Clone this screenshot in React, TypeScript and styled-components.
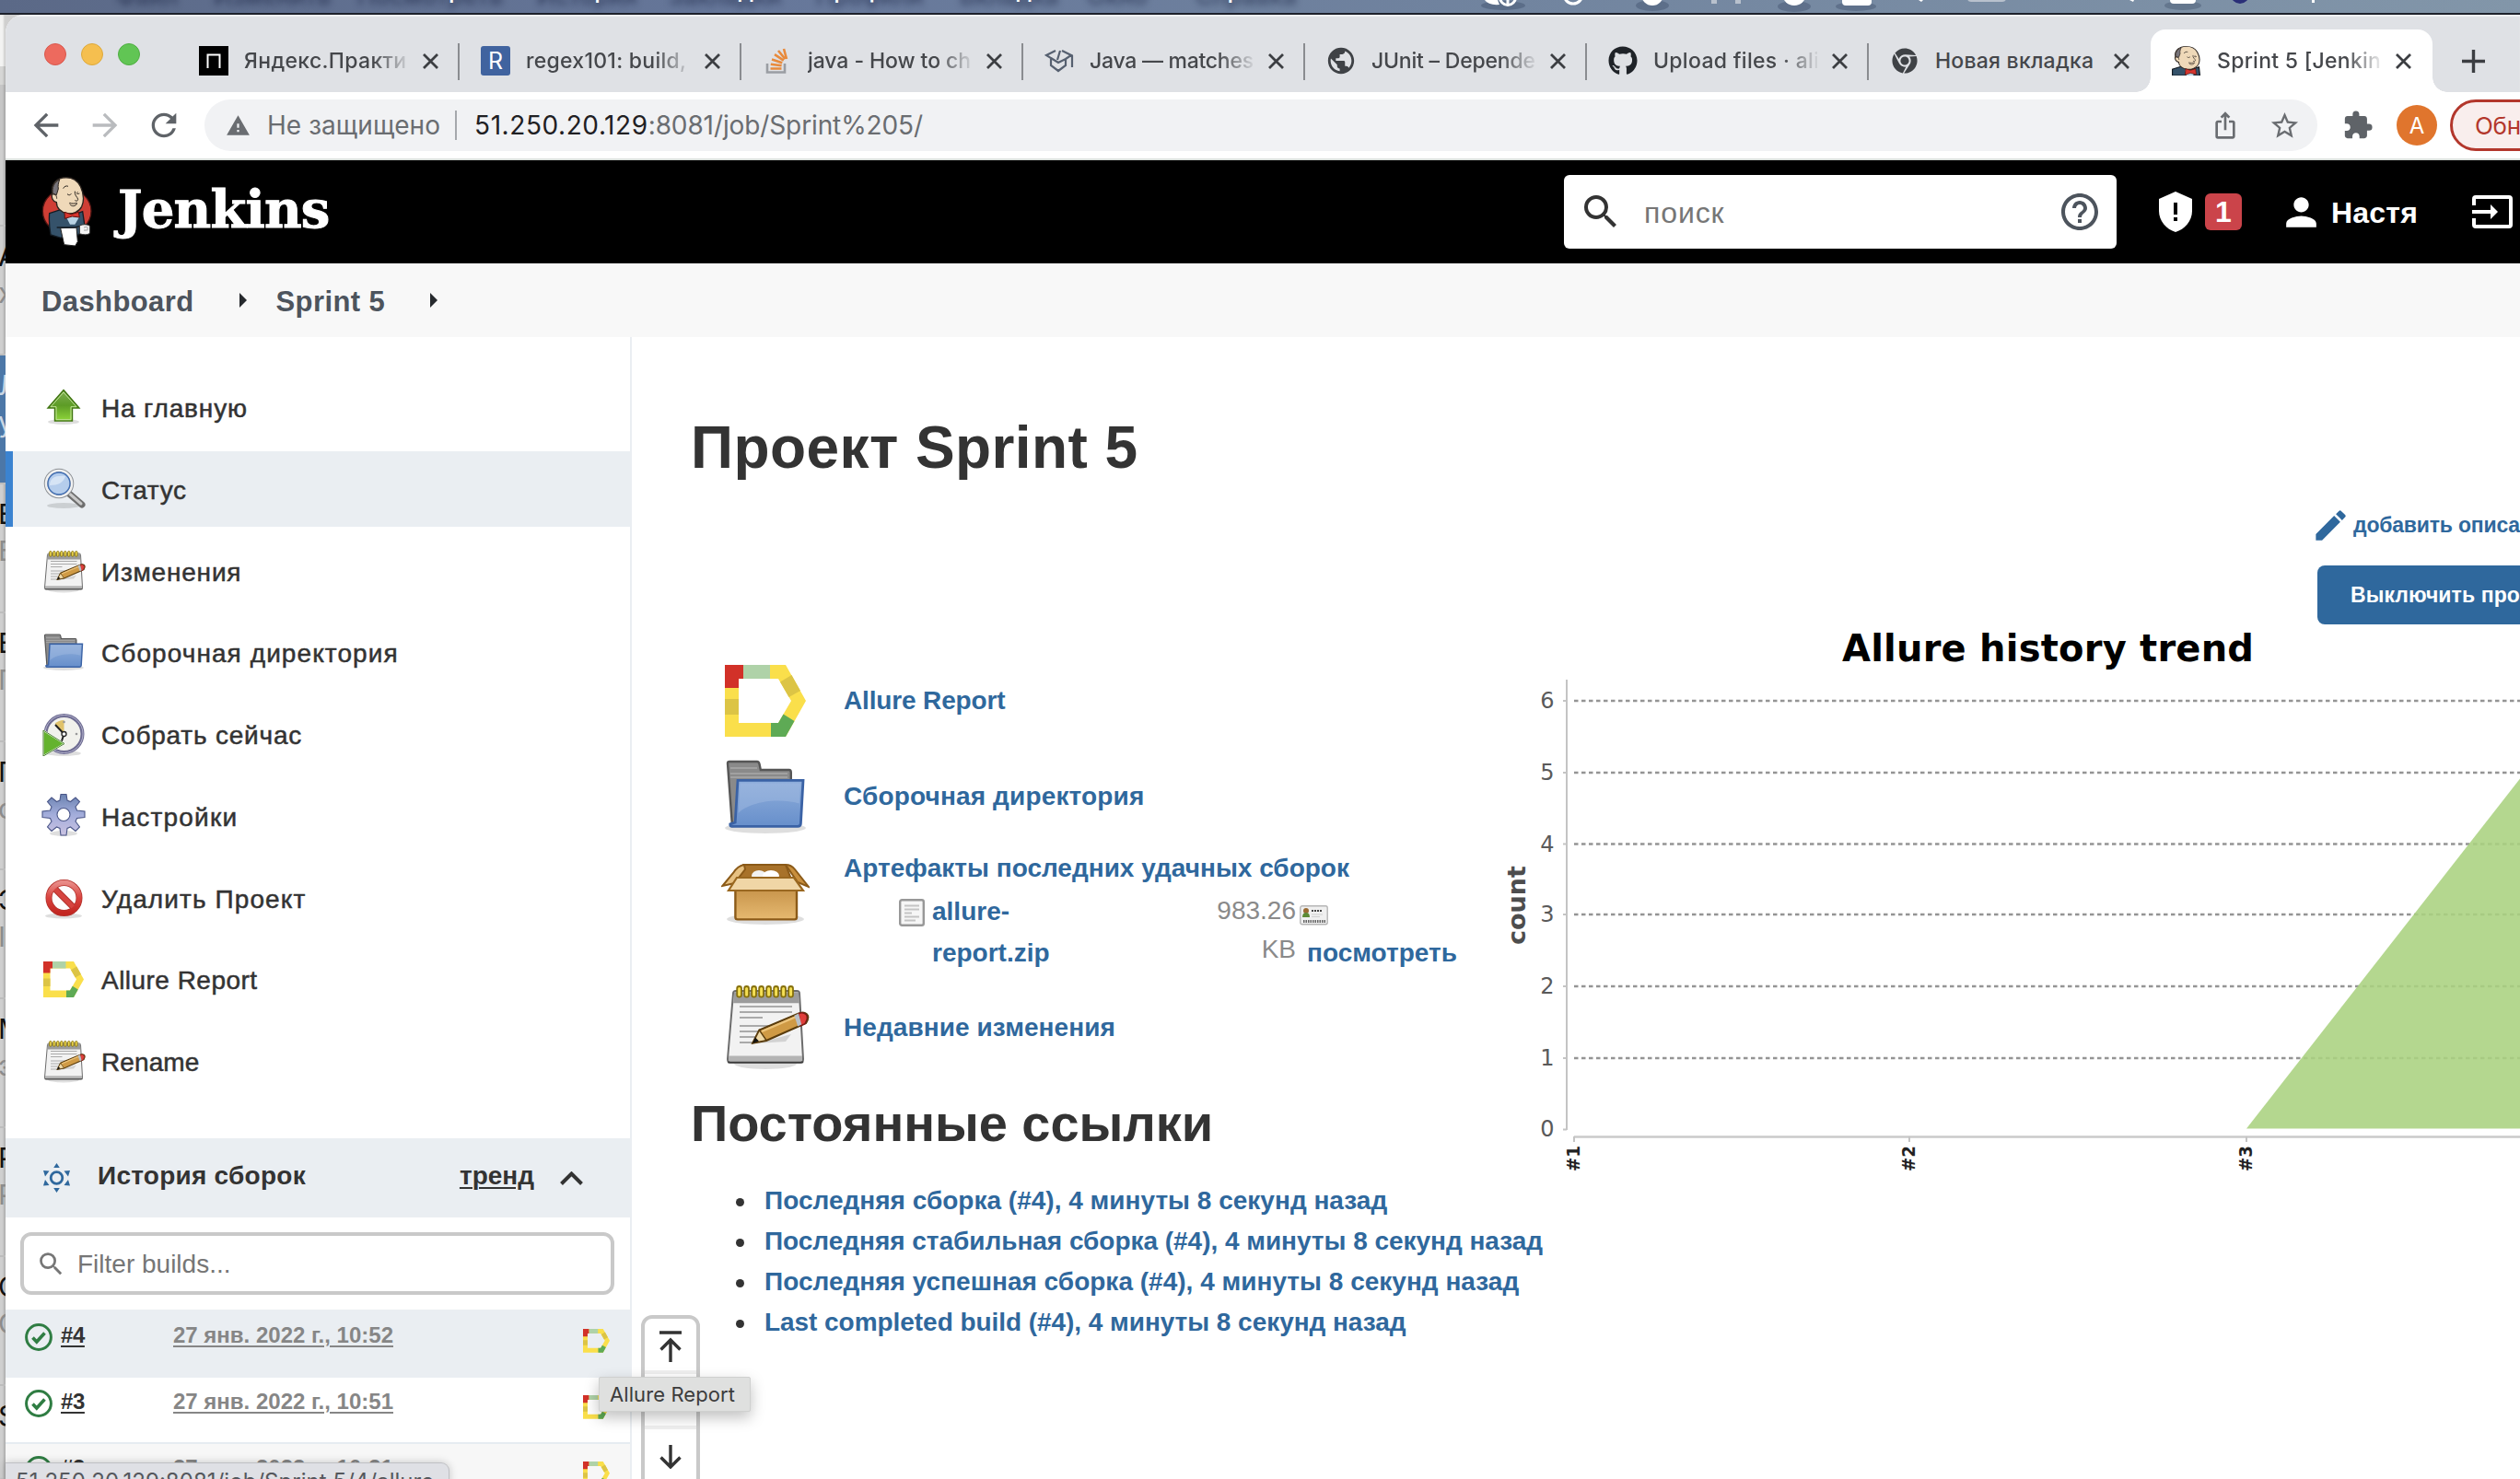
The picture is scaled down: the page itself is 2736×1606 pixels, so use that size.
import React from "react";
import styled, { createGlobalStyle, css } from "styled-components";
import {
  MdArrowBack,
  MdArrowForward,
  MdRefresh,
  MdWarning,
  MdStarBorder,
  MdExtension,
  MdIosShare,
  MdSearch,
  MdHelpOutline,
  MdPerson,
  MdPublic,
  MdEdit,
} from "react-icons/md";
import { FaGithub, FaChrome } from "react-icons/fa";

const PAGE_FONT = `"Liberation Sans", Arial, sans-serif`;
const UI_FONT = `Inter, "Liberation Sans", sans-serif`;
const LINK = "#2f689d";
const TEXT = "#333333";

const GlobalStyle = createGlobalStyle`
  * { box-sizing: border-box; }
  html, body { margin: 0; padding: 0; background: #fff; }
  svg { display: block; flex: none; }
`;

const Screen = styled.div`
  position: relative;
  width: 2736px;
  height: 1606px;
  overflow: hidden;
  display: flex;
  flex-direction: column;
  font-family: ${PAGE_FONT};
  color: ${TEXT};
  white-space: nowrap;
`;

/* ---------- macOS menu bar ---------- */

const MenuBar = styled.div`
  height: 16px;
  flex: none;
  overflow: hidden;
  display: flex;
  background: linear-gradient(90deg, #5b6987 0%, #66779a 30%, #71849f 60%, #8296a9 100%);
  border-bottom: 2px solid #1d212b;
  font: 500 26px/30px ${UI_FONT};
  color: #fff;
`;
const MenuWord = styled.div<{ $w: number }>`
  width: ${(p) => p.$w}px;
  flex: none;
  height: 30px;
  margin-top: -26px;
  text-shadow: 0 7px 7px rgba(20, 30, 60, 0.55);
`;

/* ---------- desktop & window ---------- */

const Desktop = styled.div`
  flex: 1;
  min-height: 0;
  display: flex;
  background: #cfcfcf;
`;
const BackStrip = styled.div`
  width: 6px;
  flex: none;
  overflow: hidden;
  padding-top: 228px;
  background: linear-gradient(180deg, #f3f3f2 0 56px, #d6d6d5 56px 76px, #c6c6c6 76px 136px, #cfcfcf 136px);
  box-shadow: inset -2px 0 2px rgba(0, 0, 0, 0.15);
`;
const BackItem = styled.div<{ $active?: boolean }>`
  height: 139.9px;
  padding-top: 16px;
  border-top: 2px solid #bdbdbd;
  font: 400 30px/32px ${UI_FONT};
  color: ${(p) => (p.$active ? "#c9d6e4" : "#111")};
  background: ${(p) => (p.$active ? "#4c77a7" : "transparent")};
  > span {
    display: block;
    height: 40px;
    margin-left: -2px;
    overflow: hidden;
  }
  > span + span {
    color: ${(p) => (p.$active ? "#c9d6e4" : "#8c8c8c")};
  }
`;
const Window = styled.div`
  flex: 1;
  min-width: 0;
  display: flex;
  flex-direction: column;
  background: #fff;
  border-top-left-radius: 20px;
  overflow: hidden;
`;

/* ---------- tab strip ---------- */

const TabStrip = styled.div`
  height: 84px;
  flex: none;
  padding-top: 16px;
  display: flex;
  background: #dfe1e5;
  box-shadow: inset 0 2px 1px #f1f2f4;
`;
const Lights = styled.div`
  width: 187px;
  flex: none;
  padding: 15px 0 0 42px;
  display: flex;
  gap: 16px;
`;
const Light = styled.i<{ $c: string; $b: string }>`
  width: 24px;
  height: 24px;
  border-radius: 50%;
  background: ${(p) => p.$c};
  border: 1px solid ${(p) => p.$b};
`;
const TabBox = styled.div<{ $active?: boolean; $sep?: boolean }>`
  position: relative;
  width: 306px;
  height: 68px;
  flex: none;
  padding-left: 23px;
  display: flex;
  align-items: center;
  ${(p) =>
    p.$sep &&
    css`
      background: linear-gradient(#8a8c90, #8a8c90) no-repeat;
      background-size: 2px 40px;
      background-position: right 15px;
    `}
  ${(p) =>
    p.$active &&
    css`
      background: #fff;
      border-radius: 16px 16px 0 0;
      &::before,
      &::after {
        content: "";
        position: absolute;
        bottom: 0;
        width: 16px;
        height: 16px;
      }
      &::before {
        left: -16px;
        background: radial-gradient(circle at 0 0, transparent 15.5px, #fff 16px);
      }
      &::after {
        right: -16px;
        background: radial-gradient(circle at 100% 0, transparent 15.5px, #fff 16px);
      }
    `}
`;
const Favicon = styled.div`
  width: 32px;
  height: 32px;
  margin-right: 17px;
  display: flex;
  align-items: center;
  justify-content: center;
  color: #3f4246;
`;
const LetterIcon = styled.div<{ $bg: string }>`
  width: 32px;
  height: 32px;
  border-radius: ${(p) => (p.$bg === "#000" ? 0 : 3)}px;
  background: ${(p) => p.$bg};
  color: #fff;
  font: 400 25px/32px ${UI_FONT};
  text-align: center;
`;
const TabTitle = styled.div<{ $ls: number; $fade: boolean }>`
  width: 178px;
  overflow: hidden;
  font: 500 23px/32px ${UI_FONT};
  letter-spacing: ${(p) => p.$ls}px;
  color: #45474b;
  margin-right: 16px;
  ${(p) =>
    p.$fade &&
    css`
      mask-image: linear-gradient(90deg, #000 140px, transparent 182px);
    `}
`;
const NewTab = styled.div`
  margin-left: 32px;
  display: flex;
  align-items: center;
`;

/* ---------- toolbar ---------- */

const Toolbar = styled.div`
  height: 74px;
  flex: none;
  padding: 0 0 0 24px;
  display: flex;
  align-items: center;
  border-bottom: 2px solid #dbe0dd;
  color: #5f6368;
`;
const NavButtons = styled.div`
  width: 192px;
  flex: none;
  display: flex;
  gap: 24px;
`;
const Omnibox = styled.div`
  width: 2294px;
  height: 56px;
  flex: none;
  border-radius: 28px;
  background: #f1f2f4;
  margin-right: 27px;
  padding: 0 18px 0 23px;
  display: flex;
  align-items: center;
  font: 400 28px/56px ${UI_FONT};
  color: #6a6d71;
`;
const Insecure = styled.span`
  margin-left: 18px;
  padding-right: 16px;
  letter-spacing: 0.06px;
`;
const UrlSep = styled.i`
  width: 2px;
  height: 32px;
  background: #a5a8ac;
  margin-right: 19px;
`;
const UrlHost = styled.b`
  font-weight: 400;
  letter-spacing: 0.58px;
  color: #1f2023;
`;
const UrlPath = styled.span`
  letter-spacing: -0.11px;
  flex: 1;
`;
const ShareBtn = styled.div`
  margin-right: 31px;
`;
const Avatar = styled.div`
  width: 44px;
  height: 44px;
  flex: none;
  margin: 0 14px 0 25px;
  border-radius: 50%;
  background: #e0752d;
  color: #fff;
  font: 400 24px/45px ${UI_FONT};
  text-align: center;
`;
const UpdatePill = styled.div`
  width: 220px;
  height: 56px;
  flex: none;
  border: 3px solid #b3372c;
  border-radius: 28px;
  background: #f9eeed;
  color: #b3372c;
  padding-left: 24px;
  font: 400 26px/52px ${UI_FONT};
  letter-spacing: -0.3px;
`;

/* ---------- jenkins header ---------- */

const Header = styled.div`
  height: 112px;
  flex: none;
  background: #000;
  display: flex;
  align-items: center;
  color: #fff;
`;
const Brand = styled.div`
  width: 1692px;
  flex: none;
  padding-left: 39px;
  display: flex;
  align-items: center;
`;
const BrandName = styled.div`
  margin: -7px 0 0 28px;
  font: 700 56px/64px "DejaVu Serif", serif;
  letter-spacing: -0.8px;
  -webkit-text-stroke: 1px #fff;
`;
const SearchBox = styled.div`
  width: 600px;
  height: 80px;
  flex: none;
  margin-right: 46px;
  padding: 0 16px 0 16px;
  border-radius: 6px;
  background: #fff;
  display: flex;
  align-items: center;
  color: ${TEXT};
`;
const SearchHint = styled.span`
  flex: 1;
  margin-left: 23px;
  color: #767676;
  font-size: 32px;
  letter-spacing: 0.9px;
  line-height: 80px;
  padding-top: 1px;
`;
const AlertBadge = styled.div`
  width: 40px;
  height: 40px;
  margin: 0 40px 0 14px;
  border-radius: 6px;
  background: #cb444a;
  font: 700 32px/41px ${PAGE_FONT};
  text-align: center;
`;
const UserName = styled.div`
  margin: 2px 58px 0 8px;
  font: 700 32px/40px ${PAGE_FONT};
  letter-spacing: 0.2px;
  width: 95px;
`;

const Crumbs = styled.div`
  height: 80px;
  flex: none;
  background: #f8f8f8;
  padding: 3px 0 0 39px;
  display: flex;
  align-items: center;
  font: 700 31px/76px ${PAGE_FONT};
  letter-spacing: 0.4px;
  color: #4d545d;
`;
const CrumbArrow = styled.i`
  margin: -3px 32px 0 49px;
  border-left: 8px solid #26292d;
  border-top: 8px solid transparent;
  border-bottom: 8px solid transparent;
`;

/* ---------- page ---------- */

const Page = styled.div`
  flex: 1;
  min-height: 0;
  display: flex;
`;
const Sidebar = styled.div`
  width: 680px;
  flex: none;
  border-right: 2px solid #eaeef2;
  overflow: hidden;
`;
const Tasks = styled.div`
  padding-top: 35px;
  display: flex;
  flex-direction: column;
  gap: 6.75px;
`;
const Task = styled.div<{ $active?: boolean }>`
  height: 82px;
  padding: 0 0 0 39px;
  display: flex;
  align-items: center;
  background: ${(p) => (p.$active ? "linear-gradient(90deg, #3b83d0 8px, #eaeef2 8px)" : "none")};
`;
const TaskLabel = styled.span<{ $ls: number }>`
  margin: 4px 0 0 17px;
  font-size: 28px;
  line-height: 40px;
  letter-spacing: ${(p) => p.$ls}px;
  -webkit-text-stroke: 0.5px ${TEXT};
`;
const HistoryHead = styled.div`
  height: 86px;
  margin-top: 43px;
  padding: 0 51px 0 41px;
  background: #eaeef2;
  display: flex;
  align-items: center;
  font: 700 28px/40px ${PAGE_FONT};
`;
const HistoryTitle = styled.span`
  flex: 1;
  margin: -4px 0 0 30px;
  letter-spacing: 0.25px;
`;
const TrendLink = styled.span`
  margin: -4px 28px 0 0;
  text-decoration: underline;
  text-decoration-thickness: 2px;
  text-underline-offset: 3px;
`;
const FilterBox = styled.div`
  margin: 16px 17px 16px 16px;
  height: 68px;
  border: 4px solid #c9c9c9;
  border-radius: 12px;
  padding: 1px 0 0 13px;
  display: flex;
  align-items: center;
  gap: 12px;
  color: #767676;
  font-size: 28px;
`;
const Build = styled.div<{ $tone: "sel" | "plain" | "alt" }>`
  height: ${(p) => (p.$tone === "sel" ? 74 : 72)}px;
  padding: ${(p) => (p.$tone === "sel" ? 15 : 13)}px 22px 0 21px;
  display: flex;
  align-items: flex-start;
  font: 700 24px/30px ${PAGE_FONT};
  background: ${(p) => (p.$tone === "sel" ? "#eaeef2" : p.$tone === "alt" ? "#f7f7f7" : "#fff")};
  border-bottom: ${(p) => (p.$tone === "plain" ? "2px solid #e6ecf1" : "none")};
`;
const BuildNo = styled.span`
  width: 122px;
  margin: -2px 0 0 9px;
  letter-spacing: -0.4px;
  text-decoration: underline;
  text-decoration-thickness: 2px;
  text-underline-offset: 3px;
`;
const BuildDate = styled.span`
  flex: 1;
  margin-top: -2px;
  color: #868686;
  text-decoration: underline;
  text-decoration-thickness: 2px;
  text-underline-offset: 3px;
`;
const BuildReport = styled.span`
  margin-top: 6px;
`;

const Main = styled.div`
  flex: 1;
  min-width: 0;
  padding: 84px 0 0 1px;
`;
const Title = styled.h1`
  margin: 0 0 0 63px;
  font: 700 64px/72px ${PAGE_FONT};
  letter-spacing: 0.42px;
`;
const Columns = styled.div`
  display: flex;
`;
const Overview = styled.div`
  width: 933px;
  flex: none;
  padding-top: 191px;
`;
const Entry = styled.div<{ $top?: boolean; $gap?: number; $ls?: number }>`
  padding-left: 96px;
  min-height: 96px;
  margin-bottom: ${(p) => p.$gap ?? 8}px;
  display: flex;
  align-items: ${(p) => (p.$top ? "flex-start" : "center")};
  gap: 37px;
  font: 700 28px/44px ${PAGE_FONT};
  letter-spacing: ${(p) => p.$ls ?? 0}px;
  color: ${LINK};
`;
const EntryIcon = styled.div`
  width: 96px;
  height: 96px;
  flex: none;
  display: flex;
  align-items: center;
  justify-content: center;
`;
const EntryLabel = styled.span`
  padding-top: 3px;
`;
const FileTable = styled.div`
  padding: 3px 0 0 60px;
  display: grid;
  grid-template-columns: 36px 300px 95px auto;
  align-items: start;
`;
const FileIconCell = styled.span`
  padding-top: 8px;
`;
const FileName = styled.span`
  line-height: 44.5px;
`;
const FileSize = styled.span`
  font-weight: 400;
  line-height: 42px;
  text-align: right;
  color: #8a8a8a;
`;
const FileView = styled.span`
  padding: 15px 0 0 4px;
  display: flex;
  flex-direction: column;
  gap: 8px;
`;
const ViewLink = styled.span`
  padding-left: 8px;
`;
const Subtitle = styled.h2`
  margin: 0 0 30px 63px;
  font: 700 56px/64px ${PAGE_FONT};
  letter-spacing: -0.05px;
`;
const Links = styled.ul`
  margin: 0;
  padding: 0;
  list-style: none;
`;
const LinkRow = styled.li<{ $ls: number }>`
  height: 44px;
  padding-left: 112px;
  display: flex;
  align-items: center;
  font: 700 28px/44px ${PAGE_FONT};
  letter-spacing: ${(p) => p.$ls}px;
  color: ${LINK};
  &::before {
    content: "";
    flex: none;
    width: 9px;
    height: 9px;
    margin: 3px 22px 0 0;
    border-radius: 50%;
    background: ${TEXT};
  }
`;

const Aside = styled.div`
  flex: 1;
  min-width: 0;
  overflow: hidden;
  padding-top: 24px;
`;
const EditRow = styled.div`
  height: 48px;
  padding-left: 889px;
  display: flex;
  align-items: center;
  gap: 3px;
  color: ${LINK};
  font: 700 23px/48px ${PAGE_FONT};
  letter-spacing: -0.2px;
`;
const DisableButton = styled.div`
  width: 320px;
  height: 64px;
  margin: 20px 0 2px 896px;
  padding-left: 36px;
  border-radius: 8px;
  background: ${LINK};
  color: #fff;
  font: 700 23px/64px ${PAGE_FONT};
  letter-spacing: 0.1px;
`;

/* ---------- floating pieces ---------- */

const Mover = styled.div`
  position: absolute;
  left: 696px;
  top: 1428px;
  width: 64px;
  height: 260px;
  border: 4px solid #c9c9c9;
  border-radius: 12px;
  background: #fff;
  color: ${TEXT};
  display: flex;
  flex-direction: column;
`;
const MoverCell = styled.div`
  height: 60px;
  flex: none;
  padding-top: 3px;
  display: flex;
  align-items: center;
  justify-content: center;
  border-bottom: 4px solid #efefef;
`;
const Tooltip = styled.div`
  position: absolute;
  left: 650px;
  top: 1495px;
  width: 165px;
  height: 38px;
  background: #dfe0df;
  border: 1px solid #cfd0cf;
  border-radius: 2px;
  box-shadow: 0 6px 16px rgba(0, 0, 0, 0.25);
  font: 400 22px/37px ${UI_FONT};
  letter-spacing: 0.09px;
  color: #3c3c3c;
  padding-left: 11px;
`;
const StatusBubble = styled.div`
  position: absolute;
  left: 6px;
  top: 1588px;
  width: 482px;
  height: 48px;
  background: #dfe0e5;
  border: 1px solid #bfc0c4;
  border-left: 0;
  border-top-right-radius: 9px;
  box-shadow: 0 0 10px rgba(0, 0, 0, 0.2);
  font: 400 24px/40px ${UI_FONT};
  letter-spacing: 0.05px;
  color: #55585d;
  padding-left: 11px;
`;

/* ---------- drawings ---------- */

const Cross = () => (
  <svg width="17" height="17" viewBox="0 0 17 17" stroke="#3c3e42" strokeWidth="2.8">
    <path d="M1 1L16 16M16 1L1 16" />
  </svg>
);

const PracticumIcon = () => (
  <svg width="32" height="32" viewBox="0 0 32 32">
    <path d="M0 0h32v32H0z" fill="#000" />
    <path d="M9.500 24V9.500h13V24" fill="none" stroke="#fff" strokeWidth="2" />
  </svg>
);

const StackIcon = () => (
  <svg width="26" height="28" viewBox="0 0 26 28" fill="none">
    <path d="M2 17v9.5h19V17" stroke="#9a9da3" strokeWidth="2.6" />
    <g stroke="#e88a3c" strokeWidth="2.6">
      <path d="M5.5 22.5h12M5.8 17.8l11.8 1.4M7 12.6l11.3 3.6M10 7.2l9.8 6.4M14 3l7.4 9M20 1l3 11" />
    </g>
  </svg>
);

const CubeIcon = () => (
  <svg width="32" height="26" viewBox="0 0 32 26" fill="none" stroke="#566070" strokeWidth="2.2">
    <path d="M12 2L2 7l5 3v8l8 6 8-6v-7L15 15 7 10M19 2l10 5-6 4M30 7v13M17 2l-3 10" />
  </svg>
);

const Face = () => (
  <>
    <path d="M169 118c-4-22 8-45 34-50 28-4 48 8 58 28 10 22 12 48 4 66-8 16-30 26-48 22-20-4-34-18-34-36-12-2-18-16-14-30z" fill="#efd9b9" stroke="#2b241f" strokeWidth="4" />
    <path d="M171 120c-4-18 4-38 22-46-4 12-6 20-4 30l-6 20z" fill="#77747a" stroke="#2b241f" strokeWidth="3" />
    <path d="M166 124c12-6 18 2 18 12M205 103c3-7 10-10 16-7M218 121c5 5 10 4 13-1M252 114c-4 5-4 9 6 5M243 112c-2 14 8 18 10 26-1 7-6 6-10 4M225 150c8 3 16 3 25 0M226 154c7 9 18 8 24-2" fill="none" stroke="#2b241f" strokeWidth="3" />
  </>
);

const JenkinsLogo = () => (
  <svg width="55" height="76" viewBox="134 65 165 228">
    <ellipse cx="217" cy="177" rx="79" ry="73" fill="#cf3e35" stroke="#4a1512" strokeWidth="4" />
    <path d="M160 184l36-12 34 20 38-14 8 54-22 22-48 4-8 6-34-10c-4-22-6-46-4-70z" fill="#35526a" stroke="#141c24" strokeWidth="4" />
    <path d="M215 196l22-4 20 4-14 24h-16z" fill="#b9d3e4" />
    <Face />
    <path d="M209 180l22 7 24-7 3 17-24-3-24 7z" fill="#d8352e" stroke="#5d120e" strokeWidth="3" />
    <path d="M196 232l52-2 4 46-8 14-36-4z" fill="#fff" stroke="#222" strokeWidth="3" />
    <path d="M184 230h58l16-4" fill="none" stroke="#141c24" strokeWidth="4" />
    <path d="M258 224c14-6 28-4 34 2v22c-8 8-22 6-34 2z" fill="#f4f4f4" stroke="#333" strokeWidth="3" />
    <path d="M272 230l10-2M272 239h10M284 228v12" fill="none" stroke="#777" strokeWidth="2" />
  </svg>
);

const JenkinsFavicon = () => (
  <svg width="32" height="32" viewBox="154 65 124 152" preserveAspectRatio="none">
    <path d="M156 217v-32l36-14 40 16 36-14 4 44z" fill="#35526a" stroke="#141c24" strokeWidth="5" />
    <path d="M210 190h40l-6 27h-28z" fill="#b9d3e4" />
    <Face />
    <path d="M212 182l20 8 22-8 3 30-25-8-22 10z" fill="#d8352e" stroke="#5d120e" strokeWidth="3" />
  </svg>
);

const ShieldIcon = () => (
  <svg width="36" height="44" viewBox="0 0 36 44">
    <path d="M18 0l18 8v13c0 11-8 20-18 23C8 41 0 32 0 21V8z" fill="#fff" />
    <path d="M16 12h4v13h-4zM16 28h4v4h-4z" fill="#000" />
  </svg>
);

const LogoutIcon = () => (
  <svg width="44" height="36" viewBox="0 0 44 36" fill="none" stroke="#fff" strokeWidth="4">
    <path d="M2 11V4q0-2 2-2h36q2 0 2 2v28q0 2-2 2H4q-2 0-2-2v-7" />
    <path d="M0 18h25" />
    <path d="M20 10l8 8-8 8z" fill="#fff" stroke="none" />
  </svg>
);

const AllureIcon = ({ w }: { w: number }) => (
  <svg width={w} height={(w * 78) / 88} viewBox="0 0 88 78">
    <path d="M0 0h66l22 39-22 39H0zM15 15v48h43l14-24-14-24z" fill="#fadf4b" fillRule="evenodd" />
    <path d="M0 0h20v15h-5v10H0z" fill="#d23128" />
    <path d="M20 0h29v15H20z" fill="#afd2a8" />
    <path d="M0 37h15v17H0zM60 18.500l12.500-7.500 9.500 17-12.500 7z" fill="#dcc445" />
    <path d="M50 63h8l5.500-9.500L75.500 61 66 78H50z" fill="#5eaa55" />
  </svg>
);

const Shade = ({ y, rx = 20 }: { y: number; rx?: number }) => (
  <ellipse cx="24" cy={y} rx={rx} ry="3" fill="#000" opacity="0.13" />
);

const UpIcon = () => (
  <svg width="48" height="48" viewBox="0 0 48 48">
    <defs>
      <linearGradient id="up" x1="0" y1="0" x2="0" y2="1">
        <stop offset="0" stopColor="#7fae55" />
        <stop offset="0.5" stopColor="#5d9c26" />
        <stop offset="1" stopColor="#8fd63a" />
      </linearGradient>
    </defs>
    <Shade y={40} rx={17} />
    <path d="M24 5.500L41 25h-7.500v14h-19V25H7z" fill="url(#up)" stroke="#3f7410" strokeWidth="1.4" />
    <path d="M24 8l14 15.700h-6v14H16v-14h-6z" fill="none" stroke="#c3e39a" strokeWidth="1" />
  </svg>
);

const LensIcon = () => (
  <svg width="48" height="48" viewBox="0 0 48 48">
    <Shade y={42} rx={18} />
    <path d="M30 29l14 12" stroke="#6e6e6e" strokeWidth="7" strokeLinecap="round" />
    <path d="M31 29.500l12 10.500" stroke="#c9c9c9" strokeWidth="3" strokeLinecap="round" />
    <circle cx="19" cy="18" r="14" fill="#b5cdec" stroke="#8b8f94" strokeWidth="4.500" />
    <circle cx="19" cy="18" r="14" fill="none" stroke="#f1f1f1" strokeWidth="2.600" />
    <circle cx="19" cy="18" r="12" fill="none" stroke="#3f6eb5" strokeWidth="1.300" />
    <path d="M9 20c0-8 6-11 17-10-2 7-8 10-17 10z" fill="#dfeaf8" opacity="0.8" />
  </svg>
);

const NoteIcon = ({ s = 48 }: { s?: number }) => (
  <svg width={s} height={s} viewBox="0 0 48 48">
    <Shade y={44.500} rx={17} />
    <path d="M6.500 6.500q0-1.500 1.500-1.500h33q1.500 0 1.500 1.500l2 35.500q0 2-1.500 2H5q-1.500 0-1.500-2z" fill="#f2f2f2" stroke="#6c6c6c" strokeWidth="1" />
    <path d="M7 5.600h35l.4 6H6.600z" fill="#9c9c9c" />
    <path d="M4 40.300h40v2.700H4z" fill="#b4b4b4" />
    <path d="M3.600 43.700h41" stroke="#3c3c3c" strokeWidth="0.900" />
    <path d="M10 13.500h28.500M10 16.500h28.500M10 19.500h12.500M10 24h24M10 27h20M10 30h12M10 33h8" stroke="#aaaaaa" strokeWidth="1.100" />
    {[0, 1, 2, 3, 4, 5, 6, 7].map((i) => (
      <rect key={i} x={8.600 + i * 4} y="2.500" width="2.400" height="5.800" rx="1.200" fill="#f4df54" stroke="#86700c" strokeWidth="0.900" />
    ))}
    <path d="M19 33.500l19-5-3 4z" fill="#000" opacity="0.13" />
    <path d="M17.200 33.300l3.500-7L41.500 17.500q3-1.500 4.800 0t-.3 5L24.500 32z" fill="#cf9a45" stroke="#5a3c0c" strokeWidth="1.100" />
    <path d="M22 27l20-8.600" stroke="#ecc47c" strokeWidth="1.200" />
    <path d="M17.200 33.300l3.500-7 3.800 5.500z" fill="#efd9a8" stroke="#5a3c0c" strokeWidth="0.700" />
    <path d="M17 33.500l1.500-3.300 2 2z" fill="#111" />
    <path d="M42 17.300q2.500-1 4 .5t-.5 5l-2.500 1.200z" fill="#e0403c" stroke="#7c1c18" strokeWidth="0.700" />
    <path d="M39.700 18.400l2.300-1.100 1.600 6-2 1z" fill="#b9c0c8" />
  </svg>
);

const FolderIcon = ({ s = 48 }: { s?: number }) => (
  <svg width={s} height={s} viewBox="0 0 48 48">
    <defs>
      <linearGradient id="fold" x1="0" y1="0" x2="0" y2="1">
        <stop offset="0" stopColor="#8faedb" />
        <stop offset="1" stopColor="#678fcb" />
      </linearGradient>
    </defs>
    <Shade y={41} rx={22} />
    <path d="M3.500 6q0-1 1-1h15q1 0 1.300 1.500l.6 3h15.500q1 0 1 1.500v27L6 40z" fill="#8a8a8a" stroke="#565656" strokeWidth="1.200" />
    <path d="M5 8.500h14.500M5 11.500h31M5 13.500h31" stroke="#a9a9a9" strokeWidth="0.800" />
    <path d="M9 15.200h35.500l-1.300 23.300q0 1.700-1.700 1.700H6q-1.300 0-1.100-1.300L7.600 38z" fill="url(#fold)" stroke="#3a62a5" strokeWidth="1.400" />
    <path d="M10.300 16.700h32.700l-.6 11C28 24 14 28 9.300 33z" fill="#a3bce2" opacity="0.45" />
  </svg>
);

const ClockIcon = () => (
  <svg width="48" height="48" viewBox="0 0 48 48">
    <Shade y={45} rx={19} />
    <circle cx="24.500" cy="24" r="20" fill="#f1f1ec" stroke="#6e6c92" strokeWidth="4" />
    <circle cx="24.500" cy="24" r="20.500" fill="none" stroke="#b2b1cc" strokeWidth="1" />
    <path d="M24.500 24V9q-6 0-10 4z" fill="#e0c26a" />
    <path d="M24.500 24L15 14M24.500 24l-3 9" stroke="#222" strokeWidth="2" />
    <circle cx="24.500" cy="24" r="2.500" fill="#fff" stroke="#222" strokeWidth="1.300" />
    <circle cx="38" cy="24" r="1.300" fill="#999" />
    <circle cx="24.500" cy="11" r="1.300" fill="#999" />
    <path d="M2 20l23 14.500L2 48z" fill="#64b32e" stroke="#fff" strokeWidth="1.500" />
    <path d="M2 20l23 14.500L2 48z" fill="none" stroke="#35701a" strokeWidth="0.900" />
  </svg>
);

const GearIcon = () => (
  <svg width="48" height="48" viewBox="0 0 48 48">
    <defs>
      <linearGradient id="gear" x1="0" y1="0" x2="0" y2="1">
        <stop offset="0" stopColor="#6a82b0" />
        <stop offset="0.5" stopColor="#a3addb" />
        <stop offset="1" stopColor="#cbc3e2" />
      </linearGradient>
    </defs>
    <Shade y={43} rx={15} />
    <g transform="translate(24 22.500)" fill="url(#gear)" stroke="#4a5688" strokeWidth="1.100">
      <path
        fillRule="evenodd"
        d="M-3-22H3l1 6.500 3.500 1.500 5.500-4.500 4.500 4.500-4.500 5.500 1.500 4 8.500 1V3l-8.500 1-1.500 3.500 4.500 6-4.500 4.500-5.500-4.500L4 15 3 22.500H-3L-4 15l-3.500-1.500-5.500 4.500-4.500-4.500 4.500-6L-14.500 4-23 3v-6.500l8.500-1 1.500-4-4.500-5.500 4.500-4.500 5.500 4.500L-4-15.500zM0-7a7 7 0 1 0 0 14a7 7 0 1 0 0-14z"
      />
    </g>
  </svg>
);

const NoIcon = () => (
  <svg width="48" height="48" viewBox="0 0 48 48">
    <defs>
      <linearGradient id="no" x1="0" y1="0" x2="0" y2="1">
        <stop offset="0" stopColor="#e88a86" />
        <stop offset="0.5" stopColor="#d9433e" />
        <stop offset="1" stopColor="#c32722" />
      </linearGradient>
    </defs>
    <Shade y={43.500} />
    <circle cx="24.500" cy="24" r="16.500" fill="#fdfdfd" stroke="#b3322c" strokeWidth="7" />
    <path d="M13 12.500l23 23" stroke="#b3322c" strokeWidth="7" />
    <path d="M13 12.500l23 23" stroke="#d6443f" strokeWidth="5" />
    <circle cx="24.500" cy="24" r="16.500" fill="none" stroke="url(#no)" strokeWidth="5.400" />
  </svg>
);

const BoxIcon = () => (
  <svg width="96" height="96" viewBox="0 0 48 48">
    <defs>
      <linearGradient id="box" x1="0" y1="0" x2="0" y2="1">
        <stop offset="0" stopColor="#c8954c" />
        <stop offset="1" stopColor="#e6b970" />
      </linearGradient>
    </defs>
    <Shade y={38.500} rx={21} />
    <path d="M12 9h23l5 13H7z" fill="#a8722a" stroke="#8b5a18" strokeWidth="1" />
    <ellipse cx="20.500" cy="15" rx="4" ry="3" fill="#f2f2f2" />
    <ellipse cx="27" cy="15" rx="4.500" ry="3" fill="#fff" />
    <path d="M12.500 9Q9 9.500 6.500 13.500L.7 20.500l6.500-1.500L13 11.500z" fill="#e7c182" stroke="#8b5a18" strokeWidth="1" />
    <path d="M35 9q3 0 5 2.500l7.500 9.500-6-2.500z" fill="#c88f3e" stroke="#8b5a18" strokeWidth="1" />
    <path d="M7.700 22.500h33.300v15q0 1.200-1.200 1.200H9q-1.300 0-1.300-1.200z" fill="url(#box)" stroke="#8b5a18" strokeWidth="1.200" />
    <path d="M8.500 16h31l5 7H4z" fill="#f0d6a6" stroke="#9a6820" strokeWidth="1.100" />
  </svg>
);

const FileIcon = () => (
  <svg width="28" height="30" viewBox="0 0 28 30">
    <rect x="1.200" y="1.200" width="25.600" height="27.600" rx="2" fill="#f6f6f6" stroke="#989898" strokeWidth="2.400" />
    <path d="M6 7.500h16M6 11.500h16M6 15.500h8M6 19.500h16M6 23.500h12" stroke="#c4c4c4" strokeWidth="2" />
  </svg>
);

const CardIcon = () => (
  <svg width="31" height="22" viewBox="0 0 31 22">
    <rect x="0.800" y="0.800" width="29.400" height="20" rx="2" fill="#f0f0f0" stroke="#b5b5b5" strokeWidth="1.400" />
    <circle cx="7" cy="6" r="3" fill="#9a6a32" />
    <path d="M3 13q0-5 4-5t4 5z" fill="#5d8a35" />
    <path d="M13 6h12" stroke="#444" strokeWidth="2" strokeDasharray="2 1" />
    <path d="M13 10h12M13 12.500h9" stroke="#cfcfcf" strokeWidth="1.200" />
    <path d="M4 17.500h24" stroke="#666" strokeWidth="3" strokeDasharray="1.500 1" />
  </svg>
);

const WeatherIcon = () => (
  <svg width="29" height="32" viewBox="0 0 29 32" fill={LINK}>
    <circle cx="14.500" cy="16" r="6.300" fill="none" stroke={LINK} strokeWidth="2.800" />
    <path d="M14.500 0l3.300 5h-6.600zM14.500 32l-3.300-5h6.600zM0 8l6.500.500L2 14.500zM29 8l-6.500.500L27 14.500zM0 24.500l6.500-.500L2 18zM29 24.500l-6.500-.500L27 18z" />
  </svg>
);

const CheckIcon = () => (
  <svg width="30" height="30" viewBox="0 0 30 30" fill="none" stroke="#2f7d43">
    <circle cx="15" cy="15" r="13.400" strokeWidth="3" />
    <path d="M8.500 15.500l4.300 4.500 8.700-9.500" strokeWidth="3.600" />
  </svg>
);

const MenuExtras = () => (
  <svg width="1136" height="14" viewBox="1600 0 1136 14">
    <g fill="#1c2a48" opacity="0.25">
      <ellipse cx="1632" cy="6" rx="24" ry="5" />
      <ellipse cx="1794" cy="6" rx="18" ry="6" />
      <ellipse cx="1948" cy="7" rx="18" ry="6" />
      <ellipse cx="2015" cy="7" rx="22" ry="5" />
      <ellipse cx="2370" cy="6" rx="20" ry="5" />
    </g>
    <path d="M1612 0h14l2 5q-12 1-16-5z" fill="#fff" />
    <circle cx="1637" cy="-3" r="8.500" fill="none" stroke="#fff" strokeWidth="3" />
    <path d="M1637-3v7" stroke="#fff" strokeWidth="3" />
    <circle cx="1708" cy="-6" r="10" fill="none" stroke="#fff" strokeWidth="3" />
    <circle cx="1794" cy="-6" r="12" fill="#fff" />
    <path d="M1858 0h6v4h-6zM1884 0h6v4h-6z" fill="#b8c1cd" />
    <circle cx="1948" cy="-7" r="13" fill="#fff" />
    <rect x="2000" y="-10" width="32" height="16" rx="4" fill="#fff" />
    <rect x="2136" y="-10" width="42" height="12" rx="4" fill="#b8c1cd" />
    <path d="M2083 0h5l-2 2zM2312 0h5l-1 2z" fill="#fff" />
    <rect x="2356" y="-10" width="28" height="14" rx="4" fill="#fff" />
    <circle cx="2432" cy="-6" r="10" fill="#2a2f78" />
    <path d="M2510 0h3v3h-3z" fill="#fff" />
  </svg>
);

const gridY = [761, 839, 916.500, 993, 1071, 1149];
const CHART_FONT = `"DejaVu Sans", sans-serif`;

const TrendChart = () => (
  <svg width="1116" height="600" viewBox="1620 680 1116 600" fontFamily={CHART_FONT}>
    <text x="2000" y="718" fontSize="40" fontWeight="700" fill="#000" textLength="447">
      Allure history trend
    </text>
    {gridY.map((y, i) => (
      <React.Fragment key={y}>
        <path d={`M1709 ${y}H2736`} stroke="#949494" strokeWidth="2.400" strokeDasharray="4.500 3.500" />
        <path d={`M1697 ${y}h4`} stroke="#c4c4c4" strokeWidth="2" />
        <text x="1687.5" y={y + 8} fontSize="24" textAnchor="end" fill="#5a5a5a">
          {6 - i}
        </text>
      </React.Fragment>
    ))}
    <text x="1687.5" y="1234" fontSize="24" textAnchor="end" fill="#5a5a5a">
      0
    </text>
    <path d="M1701 738v489M1697 1226.500h4" stroke="#c4c4c4" strokeWidth="2" fill="none" />
    <path d="M2439 1225.500L2736 845.500V1225.500z" fill="#aad27f" fillOpacity="0.88" />
    <path d="M1709 1234.500h1027" stroke="#cacaca" strokeWidth="2.600" />
    <path d="M1709 1234v6M2073 1234v6M2439 1234v6" stroke="#c4c4c4" strokeWidth="2" />
    <text transform="translate(1656 1026) rotate(-90)" fontSize="27" fontWeight="700" fill="#4d4d4d">
      count
    </text>
    {[1709, 2073, 2439].map((x, i) => (
      <text key={x} transform={`translate(${x + 6} 1272) rotate(-90)`} fontSize="19" fontWeight="700" fill="#222" textLength="28" lengthAdjust="spacingAndGlyphs">
        {`#${i + 1}`}
      </text>
    ))}
  </svg>
);

/* ---------- data ---------- */

const menuWords: [string, number][] = [
  ["", 126],
  ["Файл", 106],
  ["Изменить", 156],
  ["Посмотреть", 195],
  ["История", 143],
  ["Закладки", 160],
  ["Профили", 156],
  ["Вкладка", 138],
  ["Окно", 118],
  ["Справка", 302],
];

const tabs: { title: string; icon: React.ReactNode; ls: number; fade?: boolean }[] = [
  { title: "Яндекс.Практи", icon: <PracticumIcon />, ls: 0.33, fade: true },
  { title: "regex101: build,", icon: <LetterIcon $bg="#40639f">R</LetterIcon>, ls: 0.27, fade: true },
  { title: "java - How to ch", icon: <StackIcon />, ls: -0.07, fade: true },
  { title: "Java — matches", icon: <CubeIcon />, ls: -0.26, fade: true },
  { title: "JUnit – Depende", icon: <MdPublic size={34} />, ls: -0.21, fade: true },
  { title: "Upload files · ali", icon: <FaGithub size={32} color="#1f2328" />, ls: 0.31, fade: true },
  { title: "Новая вкладка", icon: <FaChrome size={28} />, ls: 0.23 },
];

const tasks: [string, React.ReactNode, number][] = [
  ["На главную", <UpIcon />, 0.84],
  ["Статус", <LensIcon />, 0.7],
  ["Изменения", <NoteIcon />, 0.8],
  ["Сборочная директория", <FolderIcon />, 1.08],
  ["Собрать сейчас", <ClockIcon />, 0.8],
  ["Настройки", <GearIcon />, 1.22],
  ["Удалить Проект", <NoIcon />, 1.1],
  ["Allure Report", <AllureIcon w={44} />, 0.47],
  ["Rename", <NoteIcon />, 0.1],
];

const IconSlot = styled.span`
  width: 48px;
  height: 48px;
  flex: none;
  display: flex;
  align-items: center;
  justify-content: center;
`;

const builds: [string, string, "sel" | "plain" | "alt"][] = [
  ["#4", "27 янв. 2022 г., 10:52", "sel"],
  ["#3", "27 янв. 2022 г., 10:51", "plain"],
  ["#2", "27 янв. 2022 г., 10:31", "alt"],
];

const backItems: string[][] = [
  ["А", "х"],
  ["Л", "у"],
  ["Е", "Б"],
  ["Е", "Г"],
  ["Г", "с"],
  ["Э", "I"],
  ["М", "э"],
  ["Р", "Р"],
  ["С", "С"],
  ["S"],
];

const permalinks: [string, number][] = [
  ["Последняя сборка (#4), 4 минуты 8 секунд назад", 0.01],
  ["Последняя стабильная сборка (#4), 4 минуты 8 секунд назад", -0.03],
  ["Последняя успешная сборка (#4), 4 минуты 8 секунд назад", 0.01],
  ["Last completed build (#4), 4 минуты 8 секунд назад", -0.05],
];

export default function App() {
  return (
    <Screen>
      <GlobalStyle />
      <MenuBar>
        {menuWords.map(([word, w]) => (
          <MenuWord key={word} $w={w}>
            {word}
          </MenuWord>
        ))}
        <MenuExtras />
      </MenuBar>

      <Desktop>
        <BackStrip>
          {backItems.map((letters, i) => (
            <BackItem key={i} $active={i === 1}>
              {letters.map((l, j) => (
                <span key={j}>{l}</span>
              ))}
            </BackItem>
          ))}
        </BackStrip>

        <Window>
          <TabStrip>
            <Lights>
              <Light $c="#ed6a5e" $b="#d9584d" />
              <Light $c="#f5bf4f" $b="#dda93c" />
              <Light $c="#61c554" $b="#4fae42" />
            </Lights>
            {tabs.map((t, i) => (
              <TabBox key={t.title} $sep={i < 6}>
                <Favicon>{t.icon}</Favicon>
                <TabTitle $ls={t.ls} $fade={!!t.fade}>
                  {t.title}
                </TabTitle>
                <Cross />
              </TabBox>
            ))}
            <TabBox $active>
              <Favicon>
                <JenkinsFavicon />
              </Favicon>
              <TabTitle $ls={0.28} $fade>
                Sprint 5 [Jenkin
              </TabTitle>
              <Cross />
            </TabBox>
            <NewTab>
              <svg width="25" height="25" viewBox="0 0 25 25" stroke="#3c3e42" strokeWidth="3.4">
                <path d="M12.500 0v25M0 12.500h25" />
              </svg>
            </NewTab>
          </TabStrip>

          <Toolbar>
            <NavButtons>
              <MdArrowBack size={40} />
              <MdArrowForward size={40} color="#b9bbbe" />
              <MdRefresh size={40} />
            </NavButtons>
            <Omnibox>
              <MdWarning size={27} />
              <Insecure>Не защищено</Insecure>
              <UrlSep />
              <UrlHost>51.250.20.129</UrlHost>
              <UrlPath>:8081/job/Sprint%205/</UrlPath>
              <ShareBtn>
                <MdIosShare size={32} />
              </ShareBtn>
              <MdStarBorder size={35} />
            </Omnibox>
            <MdExtension size={34} />
            <Avatar>A</Avatar>
            <UpdatePill>Обн</UpdatePill>
          </Toolbar>

          <Header>
            <Brand>
              <JenkinsLogo />
              <BrandName>Jenkins</BrandName>
            </Brand>
            <SearchBox>
              <MdSearch size={48} />
              <SearchHint>поиск</SearchHint>
              <MdHelpOutline size={48} color="#4d545d" />
            </SearchBox>
            <ShieldIcon />
            <AlertBadge>1</AlertBadge>
            <MdPerson size={49} />
            <UserName>Настя</UserName>
            <LogoutIcon />
          </Header>

          <Crumbs>
            Dashboard
            <CrumbArrow />
            Sprint 5
            <CrumbArrow />
          </Crumbs>

          <Page>
            <Sidebar>
              <Tasks>
                {tasks.map(([label, icon, ls], i) => (
                  <Task key={label} $active={i === 1}>
                    <IconSlot>{icon}</IconSlot>
                    <TaskLabel $ls={ls}>{label}</TaskLabel>
                  </Task>
                ))}
              </Tasks>
              <HistoryHead>
                <WeatherIcon />
                <HistoryTitle>История сборок</HistoryTitle>
                <TrendLink>тренд</TrendLink>
                <svg width="25" height="15" viewBox="0 0 25 15" fill="none" stroke={TEXT} strokeWidth="4">
                  <path d="M1.500 13.500l11-11 11 11" />
                </svg>
              </HistoryHead>
              <FilterBox>
                <MdSearch size={33} />
                Filter builds...
              </FilterBox>
              {builds.map(([no, date, tone]) => (
                <Build key={no} $tone={tone}>
                  <CheckIcon />
                  <BuildNo>{no}</BuildNo>
                  <BuildDate>{date}</BuildDate>
                  <BuildReport>
                    <AllureIcon w={29} />
                  </BuildReport>
                </Build>
              ))}
            </Sidebar>

            <Main>
              <Title>Проект Sprint 5</Title>
              <Columns>
                <Overview>
                  <Entry $ls={-0.15}>
                    <EntryIcon>
                      <AllureIcon w={88} />
                    </EntryIcon>
                    Allure Report
                  </Entry>
                  <Entry $ls={0.15}>
                    <EntryIcon>
                      <FolderIcon s={96} />
                    </EntryIcon>
                    Сборочная директория
                  </Entry>
                  <Entry $top $gap={9}>
                    <EntryIcon>
                      <BoxIcon />
                    </EntryIcon>
                    <div>
                      Артефакты последних удачных сборок
                      <FileTable>
                        <FileIconCell>
                          <FileIcon />
                        </FileIconCell>
                        <FileName>
                          allure-
                          <br />
                          report.zip
                        </FileName>
                        <FileSize>
                          983.26
                          <br />
                          KB
                        </FileSize>
                        <FileView>
                          <CardIcon />
                          <ViewLink>посмотреть</ViewLink>
                        </FileView>
                      </FileTable>
                    </div>
                  </Entry>
                  <Entry $gap={26} $ls={0.08}>
                    <EntryIcon>
                      <NoteIcon s={96} />
                    </EntryIcon>
                    <EntryLabel>Недавние изменения</EntryLabel>
                  </Entry>
                  <Subtitle>Постоянные ссылки</Subtitle>
                  <Links>
                    {permalinks.map(([label, ls]) => (
                      <LinkRow key={label} $ls={ls}>
                        {label}
                      </LinkRow>
                    ))}
                  </Links>
                </Overview>
                <Aside>
                  <EditRow>
                    <MdEdit size={43} />
                    добавить описание
                  </EditRow>
                  <DisableButton>Выключить проект</DisableButton>
                  <TrendChart />
                </Aside>
              </Columns>
            </Main>
          </Page>
        </Window>
      </Desktop>

      <Mover>
        <MoverCell>
          <svg width="24" height="34" viewBox="0 0 24 34" fill="none" stroke={TEXT} strokeWidth="3.4">
            <path d="M0 2h24M12 34V11M1.500 20.500L12 10l10.500 10.500" />
          </svg>
        </MoverCell>
        <MoverCell />
        <MoverCell>
          <svg width="24" height="26" viewBox="0 0 24 26" fill="none" stroke={TEXT} strokeWidth="3.400">
            <path d="M12 0v23M1.500 13.500L12 24l10.500-10.500" />
          </svg>
        </MoverCell>
      </Mover>
      <Tooltip>Allure Report</Tooltip>
      <StatusBubble>51.250.20.129:8081/job/Sprint 5/4/allure</StatusBubble>
    </Screen>
  );
}
